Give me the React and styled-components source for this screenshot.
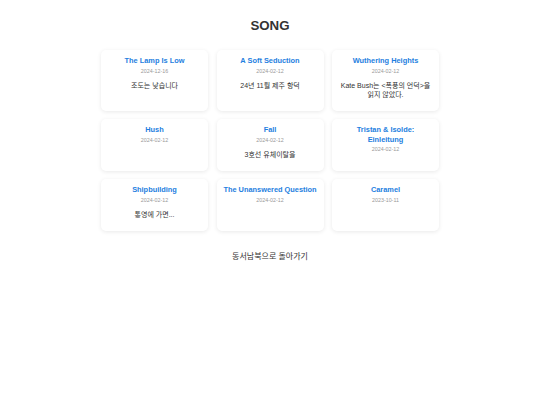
import React from 'react';
import styled, { createGlobalStyle } from 'styled-components';

const songs = [
    { title: 'The Lamp Is Low', date: '2024-12-16', desc: '조도는 낮습니다' },
    { title: 'A Soft Seduction', date: '2024-02-12', desc: '24년 11월 제주 항덕' },
    { title: 'Wuthering Heights', date: '2024-02-12', desc: 'Kate Bush는 <폭풍의 언덕>을 읽지 않았다.' },
    { title: 'Hush', date: '2024-02-12' },
    { title: 'Fall', date: '2024-02-12', desc: '3호선 유체이탈을' },
    { title: 'Tristan & Isolde: Einleitung', date: '2024-02-12' },
    { title: 'Shipbuilding', date: '2024-02-12', desc: '통영에 가면...' },
    { title: 'The Unanswered Question', date: '2024-02-12' },
    { title: 'Caramel', date: '2023-10-11' },
];

const App = () => {
    return(
        <Page>
            <GlobalStyle />
            <Title>SONG</Title>
            <Grid>
                {songs.map((song) => (
                    <Card key={song.title}>
                        <SongTitle>{song.title}</SongTitle>
                        <SongDate>{song.date}</SongDate>
                        {song.desc && <SongDesc>{song.desc}</SongDesc>}
                    </Card>
                ))}
            </Grid>
            <BackLink href="#">동서남북으로 돌아가기</BackLink>
        </Page>
    )
}

const GlobalStyle = createGlobalStyle`
    body {
        margin: 0;
        background: #FFFFFF;
        font-family: "Liberation Sans", "Noto Sans CJK KR", sans-serif;
    }
`;

const Page = styled.div`
    display: flex;
    flex-direction: column;
    align-items: center;
    padding-top: 17.5px;
`;

const Title = styled.h1`
    margin: 0 0 17.6px;
    font-size: 13.3px;
    font-weight: bold;
    color: #333333;
`;

const Grid = styled.div`
    width: 338px;
    display: grid;
    grid-template-columns: repeat(3, 1fr);
    gap: 8.5px;
`;

const Card = styled.div`
    background: #FFFFFF;
    border-radius: 5px;
    box-shadow: 0 1px 4px rgba(0, 0, 0, 0.09);
    padding: 6.4px 6.6px 12px;
    text-align: center;
    word-break: keep-all;
`;

const SongTitle = styled.h3`
    margin: 0;
    font-size: 7.4px;
    line-height: 9.3px;
    font-weight: bold;
    color: #1e80e0;
`;

const SongDate = styled.div`
    margin-top: 1.8px;
    font-size: 5.33px;
    line-height: 7px;
    color: #999999;
`;

const SongDesc = styled.p`
    margin: 6px 0 0;
    font-size: 7px;
    line-height: 9px;
    color: #333333;
`;

const BackLink = styled.a`
    margin-top: 21.2px;
    font-size: 8px;
    line-height: 10px;
    color: #333333;
    text-decoration: none;
`;

export default App
